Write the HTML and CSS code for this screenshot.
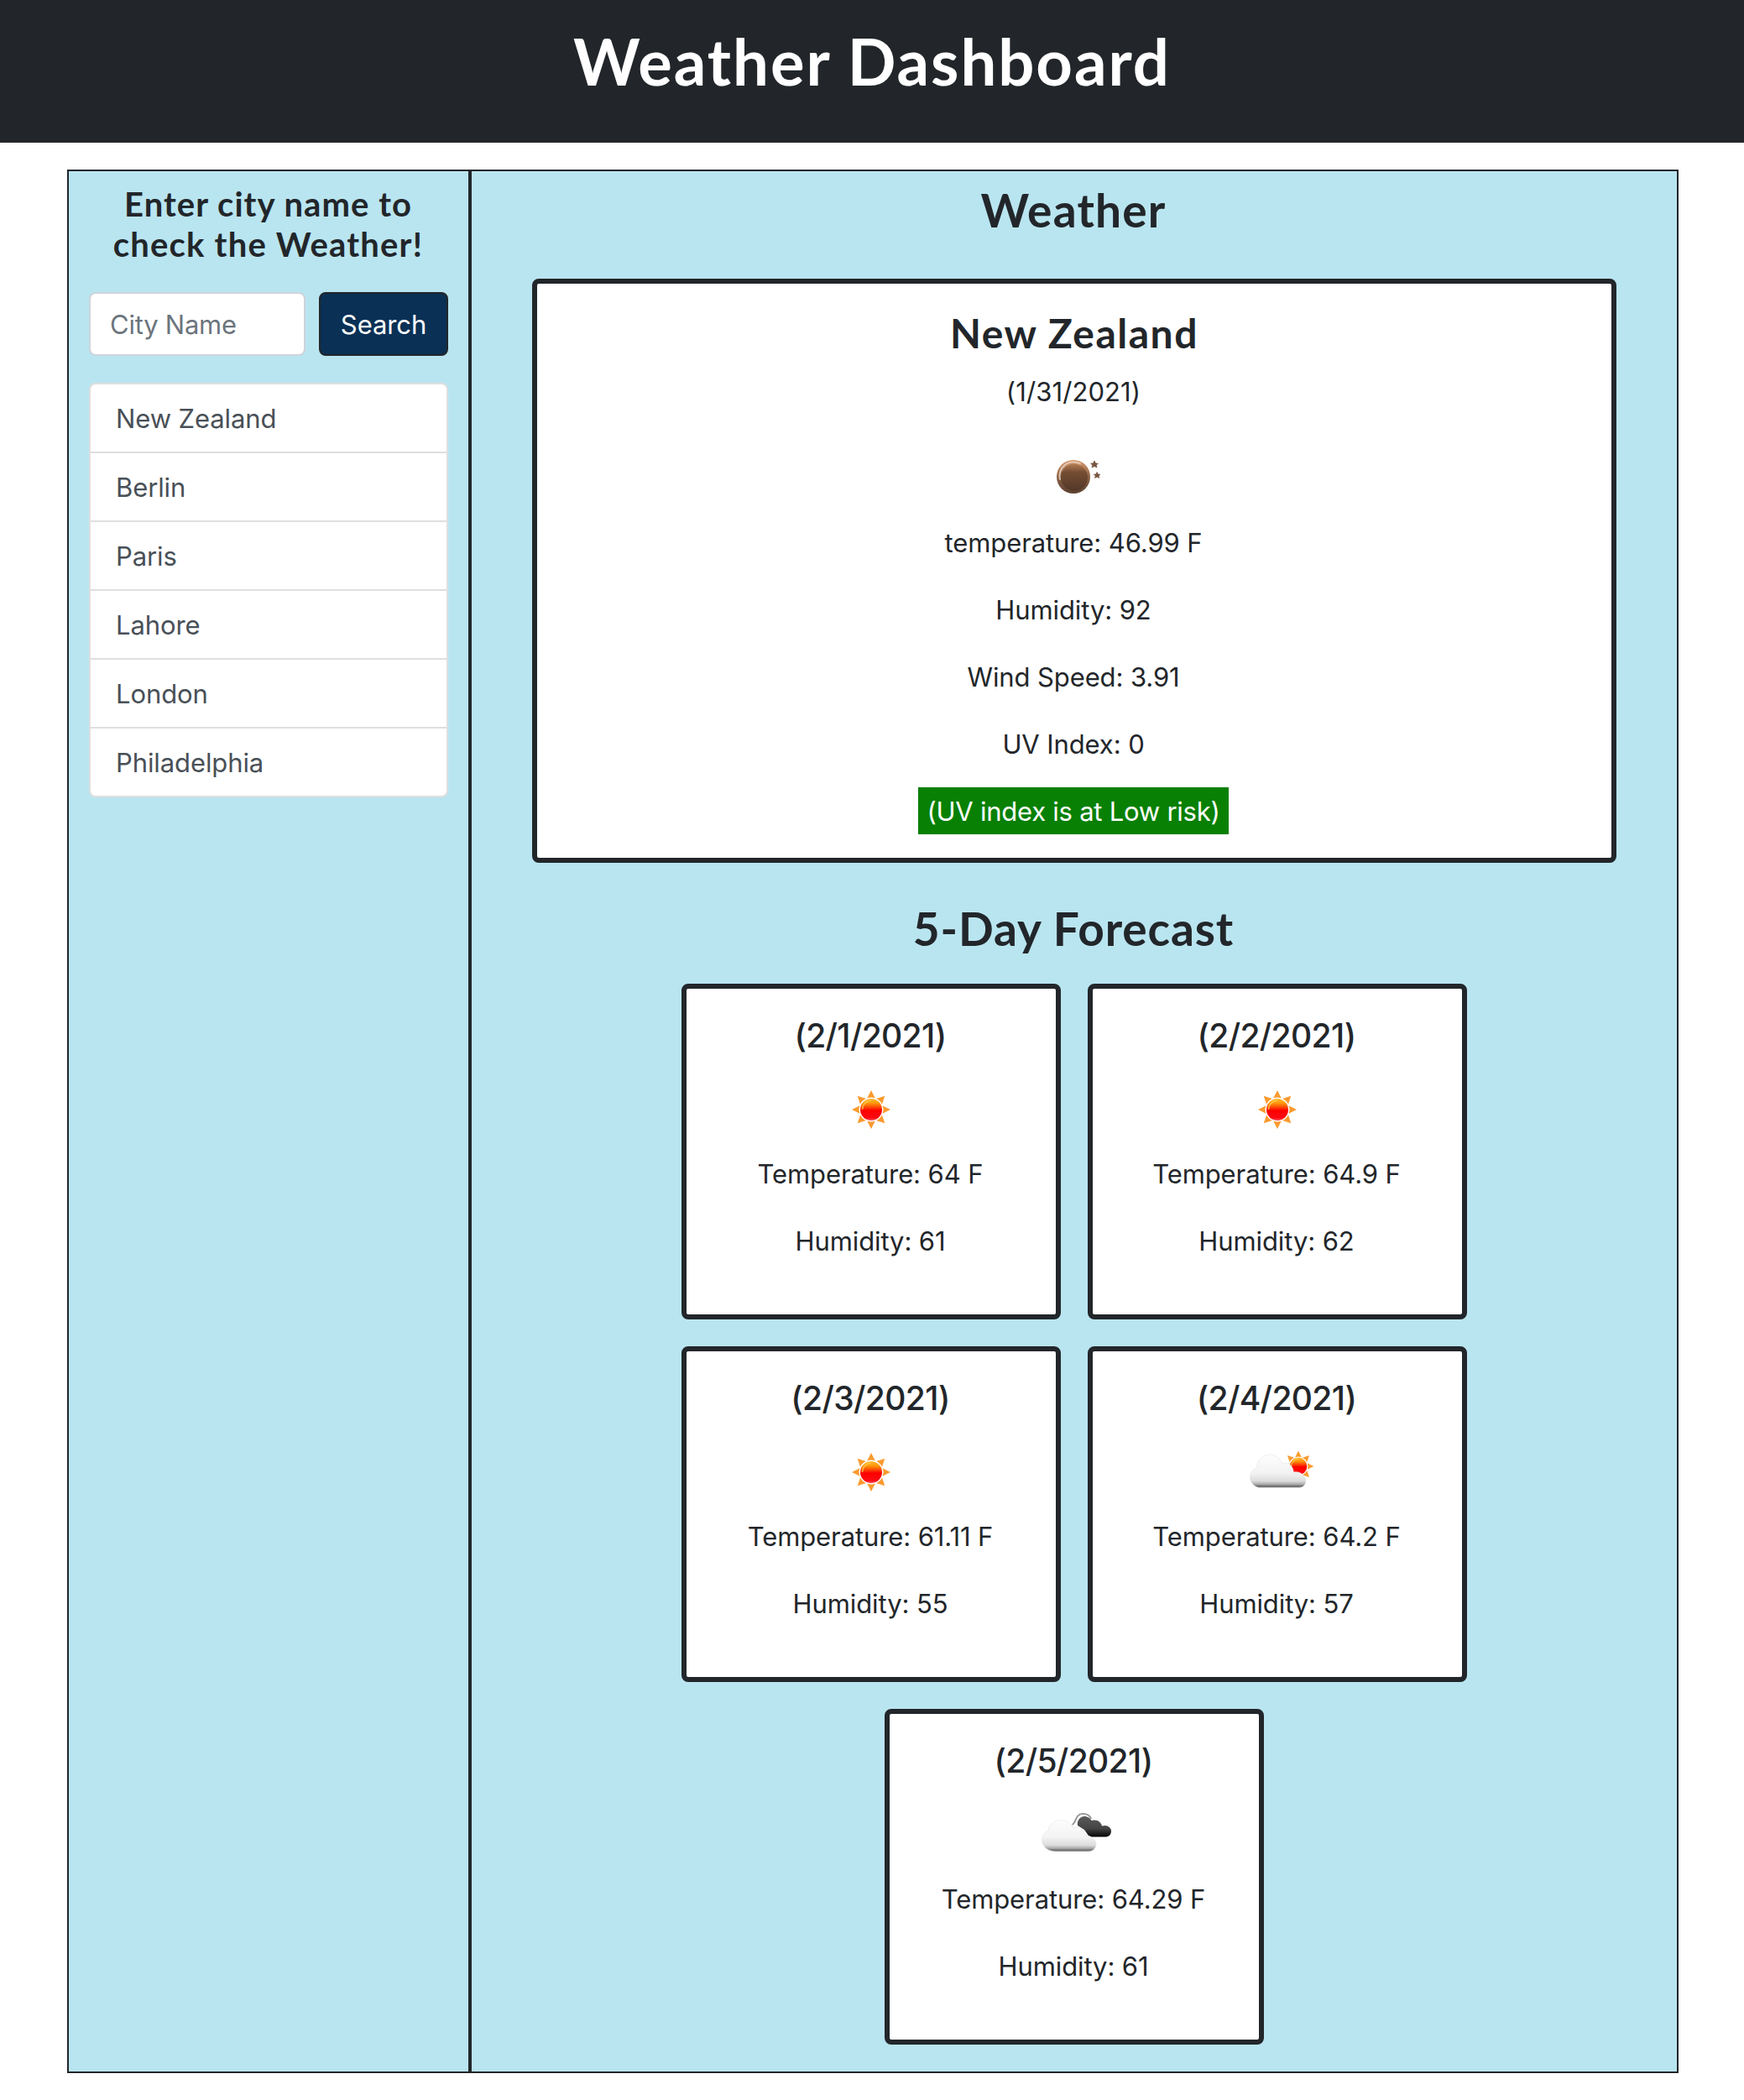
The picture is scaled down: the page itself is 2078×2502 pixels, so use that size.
FILE: index.html
```
<!DOCTYPE html>
<html lang="en">
<head>
<meta charset="utf-8">
<title>Weather Dashboard</title>
<link rel="stylesheet" href="styles.css">
</head>
<body>
<svg class="defs" aria-hidden="true">
  <defs>
    <linearGradient id="sunCore" x1="0" y1="0" x2="0" y2="1">
      <stop offset="0" stop-color="#ffb62e"/><stop offset=".2" stop-color="#ff9a0c"/><stop offset=".42" stop-color="#fb3a05"/><stop offset=".54" stop-color="#fd0000"/><stop offset=".88" stop-color="#fb0a12"/><stop offset="1" stop-color="#f8505c"/>
    </linearGradient>
    <linearGradient id="moonRim" x1="0" y1="0" x2="0" y2="1">
      <stop offset="0" stop-color="#d99a6c"/><stop offset=".5" stop-color="#8a6145"/><stop offset="1" stop-color="#5c4030"/>
    </linearGradient>
    <linearGradient id="moonCore" x1="0" y1="0" x2="0" y2="1">
      <stop offset="0" stop-color="#b07a52"/><stop offset=".3" stop-color="#744d33"/><stop offset="1" stop-color="#533828"/>
    </linearGradient>
    <linearGradient id="cloudFill" x1="0" y1="0" x2="0" y2="1">
      <stop offset="0" stop-color="#fdfdfd"/><stop offset=".55" stop-color="#f3f3f3"/><stop offset=".8" stop-color="#dcdcdc"/><stop offset=".9" stop-color="#a9a9a9"/><stop offset=".95" stop-color="#707070"/><stop offset="1" stop-color="#858585"/>
    </linearGradient>
    <linearGradient id="darkFill" x1="0" y1="0" x2="0" y2="1">
      <stop offset="0" stop-color="#5a5a5a"/><stop offset=".6" stop-color="#444"/><stop offset="1" stop-color="#050505"/>
    </linearGradient>
    <symbol id="sun" viewBox="0 0 100 100">
      <g fill="#fb9a2e">
        <path id="ray" d="M50 27 L54.800 36.500 Q50 34.500 45.200 36.500 Z"/>
        <use href="#ray" transform="rotate(45 50 50)"/><use href="#ray" transform="rotate(90 50 50)"/>
        <use href="#ray" transform="rotate(135 50 50)"/><use href="#ray" transform="rotate(180 50 50)"/>
        <use href="#ray" transform="rotate(225 50 50)"/><use href="#ray" transform="rotate(270 50 50)"/>
        <use href="#ray" transform="rotate(315 50 50)"/>
      </g>
      <circle cx="50" cy="50" r="13" fill="url(#sunCore)"/>
      <path d="M39.5 50 A11 11 0 0 1 50 39" fill="none" stroke="#ffd257" stroke-width="1.6" opacity=".7"/>
    </symbol>
    <symbol id="moon" viewBox="0 0 100 100">
      <circle cx="49" cy="50" r="20" fill="url(#moonRim)"/>
      <path d="M33 53 A16.5 16.5 0 0 1 57 34.5" fill="none" stroke="#ead6c8" stroke-width="2" stroke-linecap="round" opacity=".8"/>
      <circle cx="50" cy="51" r="16" fill="url(#moonCore)"/>
      <path id="star" fill="#77553f" stroke="#77553f" stroke-width=".8" d="M74 31 L75.400 34 L78.400 34.200 L76.200 36.200 L77 39 L74 37.600 L71 39 L71.800 36.200 L69.600 34.200 L72.600 34 Z"/>
      <use href="#star" transform="translate(12.4 17.3) scale(.875)"/>
    </symbol>
    <symbol id="cloud" viewBox="0 0 100 100">
      <path fill="url(#cloudFill)" stroke="#e4e4e4" stroke-width=".6" d="M28 70 C20 70 11.500 65 11.500 56 C11.500 51 14.500 47 18.500 45.500 C20 38 26 32.500 34 32.500 C41 32.500 46 36 48.500 42 C52 39.500 60.500 41 62.500 51 C65 50 71 52 72.500 55 C75 56 76 59 76 61 C76 66 72 70 67 70 Z"/>
    </symbol>
    <symbol id="partlyCloud" viewBox="0 0 100 100">
      <path fill="url(#cloudFill)" stroke="#e4e4e4" stroke-width=".6" d="M28 68.500 C22 67 17.500 62 17.500 56 C17.500 50 21 46 25.500 44.500 C26 35 33 29 41 29 C48 29 53 33 55.500 40 C62 36.500 68 41 69.500 50 C73 49 79 50.500 80 53.500 C83 55 84 58 84 60 C84 65 80 68.500 76 68.500 Z"/>
    </symbol>
    <symbol id="partly" viewBox="0 0 100 100">
      <use href="#sun" x="35" y="3" width="80" height="80"/>
      <use href="#partlyCloud" width="100" height="100"/>
    </symbol>
    <symbol id="broken" viewBox="0 0 100 100">
      <path d="M47.500 37 C52 36 51 24 60 24 C66 24 69 27 70 30" fill="none" stroke="#999" stroke-width="2" transform="translate(0 1)"/>
      <path fill="url(#darkFill)" d="M54 39 C53 33 57 28 62 28 C66 28 69 30.500 70.500 33 C76 31 82 34 83 39.500 C89 37.500 94 41 94 45.500 C94 50 91 52.500 87 52.500 L68 52.500 L62 44 Z"/>
      <use href="#cloud" width="100" height="100"/>
    </symbol>
  </defs>
</svg>

<header class="masthead"><h1>Weather Dashboard</h1></header>

<main class="dashboard">
  <aside class="sidebar">
    <h2 class="prompt"><span class="line-one">Enter city name to</span><br>check the Weather!</h2>
    <form class="search">
      <input class="search-input" type="text" placeholder="City Name">
      <button class="search-button" type="button">Search</button>
    </form>
    <ul class="cities">
      <li>New Zealand</li>
      <li>Berlin</li>
      <li>Paris</li>
      <li>Lahore</li>
      <li>London</li>
      <li>Philadelphia</li>
    </ul>
  </aside>

  <section class="content">
    <h2 class="heading">Weather</h2>
    <article class="current">
      <h3>New Zealand</h3>
      <p class="date">(1/31/2021)</p>
      <svg class="icon"><use href="#moon"/></svg>
      <p>temperature: 46.99 F</p>
      <p>Humidity: 92</p>
      <p>Wind Speed: 3.91</p>
      <p>UV Index: 0</p>
      <div class="uv-risk">(UV index is at Low risk)</div>
    </article>

    <h2 class="heading forecast-heading">5-Day Forecast</h2>
    <div class="forecast">
      <article class="day"><h4>(2/1/2021)</h4><svg class="icon"><use href="#sun"/></svg><p>Temperature: 64 F</p><p>Humidity: 61</p></article>
      <article class="day"><h4>(2/2/2021)</h4><svg class="icon"><use href="#sun"/></svg><p>Temperature: 64.9 F</p><p>Humidity: 62</p></article>
      <article class="day"><h4>(2/3/2021)</h4><svg class="icon"><use href="#sun"/></svg><p>Temperature: 61.11 F</p><p>Humidity: 55</p></article>
      <article class="day"><h4>(2/4/2021)</h4><svg class="icon"><use href="#partly"/></svg><p>Temperature: 64.2 F</p><p>Humidity: 57</p></article>
      <article class="day"><h4>(2/5/2021)</h4><svg class="icon"><use href="#broken"/></svg><p>Temperature: 64.29 F</p><p>Humidity: 61</p></article>
    </div>
  </section>
</main>
</body>
</html>
```
FILE: styles.css
```
* { box-sizing: border-box; margin: 0; padding: 0; }

body {
  background: #fff;
  color: #22262a;
  font: 400 31px/48px Inter, "Liberation Sans", sans-serif;
  letter-spacing: -0.1px;
}

.defs { display: block; width: 0; height: 0; }

.masthead {
  height: 170px;
  padding-top: 28px;
  background: #22262a;
  color: #fff;
  text-align: center;
}
.masthead h1 { font: 700 76px/90px Lato, sans-serif; letter-spacing: 1.98px; }

.dashboard {
  display: flex;
  height: 2268px;
  margin: 32px 78px 0 80px;
  border: 2px solid #22262a;
  background: #b9e5f0;
}

.sidebar {
  width: 480px;
  padding: 15px 24px 0;
  border-right: 4px solid #22262a;
}
.prompt {
  width: 427px;
  font: 700 40px/48px Lato, sans-serif;
  letter-spacing: 1.2px;
  text-align: center;
  white-space: nowrap;
}
.line-one { letter-spacing: 1.05px; }

.search { display: flex; gap: 16px; width: 428px; margin-top: 33px; }
.search-input {
  width: 258px;
  height: 76px;
  padding: 1px 23px 0;
  border: 2px solid #ced4da;
  border-radius: 8px;
  background: #fff;
  color: #495057;
  font: inherit;
  letter-spacing: -0.24px;
}
.search-input::placeholder { color: #6c757d; opacity: 1; }
.search-button {
  width: 154px;
  height: 76px;
  padding-top: 1px;
  border: 2px solid #22262a;
  border-radius: 8px;
  background: #0a3055;
  color: #fff;
  font: inherit;
  letter-spacing: inherit;
}

.cities {
  width: 428px;
  margin-top: 32px;
  border: 2px solid #dfdfdf;
  border-radius: 8px;
  background: #fff;
  color: #495057;
  list-style: none;
}
.cities li { padding: 17px 30px 15px; }
.cities li + li { border-top: 2px solid #dfdfdf; }

.content { flex: 1; padding: 14px 72px 0; text-align: center; }
.heading { padding-right: 2px; font: 700 55px/65px Lato, sans-serif; letter-spacing: 1.2px; }
.forecast-heading { margin-top: 46px; letter-spacing: 0.88px; }

.current, .day {
  display: flex;
  flex-direction: column;
  align-items: center;
  border: 6px solid #22262a;
  border-radius: 8px;
  background: #fff;
}
.current { height: 696px; margin-top: 49px; padding-top: 31px; }
.current h3 { font: 700 48px/56px Lato, sans-serif; letter-spacing: 1.5px; }
.current .date { margin-top: 18px; letter-spacing: 0.1px; }
.current p, .day p, .day h4 { padding-right: 2px; }
.current .icon { margin: 27px 0 5px; }
.icon { display: block; width: 100px; height: 100px; }
.icon ~ p + p { margin-top: 32px; }
.uv-risk {
  width: 370px;
  height: 56px;
  margin: 27px 2px 0 0;
  background: #088004;
  color: #fff;
  line-height: 57px;
  letter-spacing: -0.24px;
}

.forecast {
  display: flex;
  flex-wrap: wrap;
  justify-content: center;
  gap: 32px;
  width: 936px;
  margin: 33px auto 0;
}
.day { width: 452px; height: 400px; padding-top: 32px; }
.day h4 { font: 500 39px/48px Inter, sans-serif; letter-spacing: -0.64px; }
.day .icon { margin: 14px 0 3px; }
```
